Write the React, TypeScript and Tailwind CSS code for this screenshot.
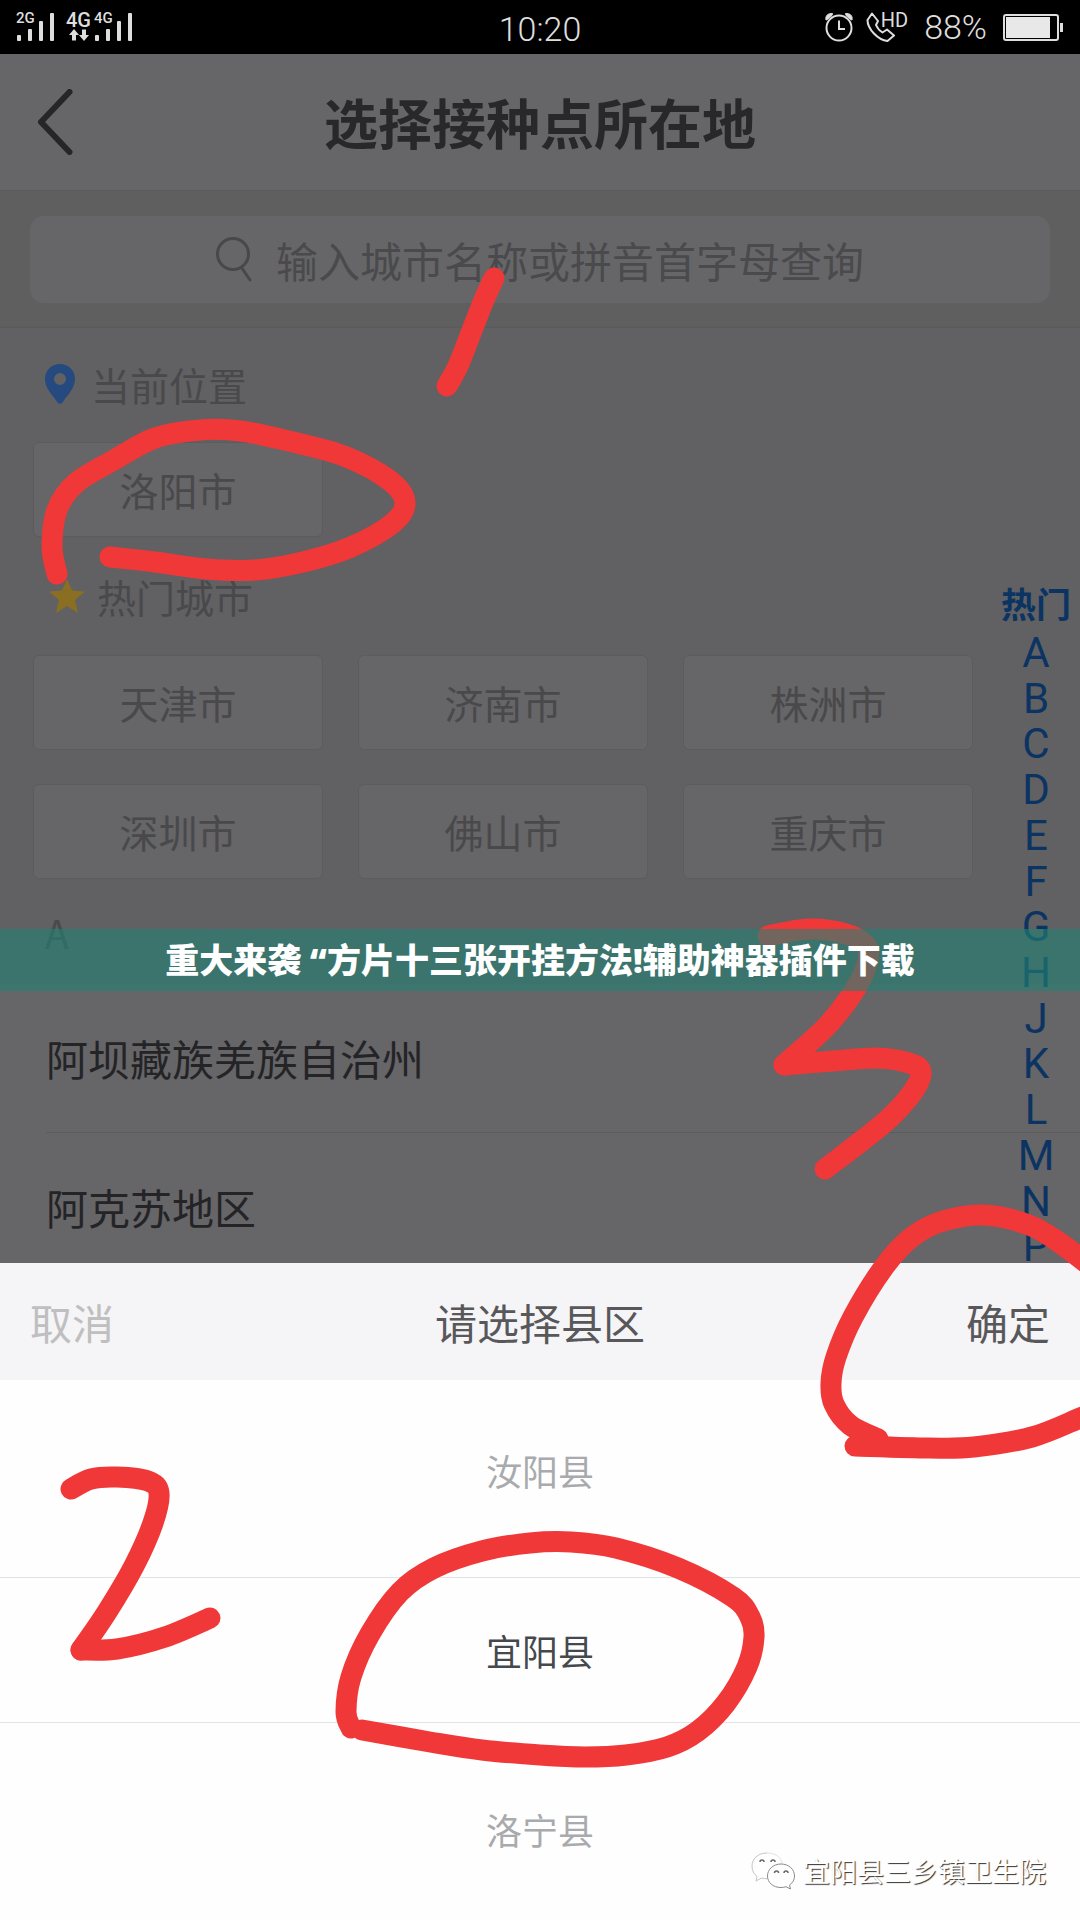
import clsx from 'clsx'

type Point = [number, number]

const HOT_CITIES = ['天津市', '济南市', '株洲市', '深圳市', '佛山市', '重庆市']
const LETTERS = ['A', 'B', 'C', 'D', 'E', 'F', 'G', 'H', 'J', 'K', 'L', 'M', 'N', 'P']

// pen strokes drawn over the page, a sharp corner starts a new stroke
const STROKES: Point[][] = [
  [[494, 278], [484, 300], [471, 333], [458, 366], [447, 386]],
  [
    [57, 574], [52, 547], [57, 510], [76, 483], [114, 460], [155, 438], [200, 430],
    [241, 431], [293, 442], [344, 456], [389, 480], [405, 502], [393, 523],
    [351, 547], [303, 562], [255, 570], [207, 569], [155, 562], [110, 557],
  ],
  [[768, 936], [809, 929], [846, 934], [867, 947], [865, 970], [850, 997], [826, 1027], [784, 1065]],
  [[784, 1065], [833, 1061], [877, 1058], [909, 1063], [921, 1072], [912, 1093], [884, 1123], [825, 1169]],
  [
    [878, 1439], [850, 1425], [834, 1404], [831, 1383], [836, 1357], [853, 1317], [884, 1267],
    [912, 1237], [943, 1221], [984, 1215], [1029, 1225], [1060, 1243], [1094, 1269],
  ],
  [[1094, 1412], [1080, 1418], [1032, 1437], [974, 1447], [929, 1448], [855, 1446]],
  [[71, 1489], [91, 1479], [117, 1477], [148, 1481], [159, 1493], [153, 1523], [134, 1566], [107, 1612], [81, 1650]],
  [[81, 1650], [117, 1649], [165, 1637], [210, 1618]],
  [
    [351, 1728], [346, 1712], [351, 1677], [370, 1634], [400, 1592], [434, 1568], [482, 1551],
    [530, 1543], [571, 1542], [616, 1548], [678, 1568], [733, 1597], [750, 1617], [754, 1637],
    [747, 1667], [726, 1703], [698, 1731], [667, 1747], [626, 1755], [585, 1757], [540, 1755],
    [482, 1750], [430, 1742], [362, 1730],
  ],
]

function smoothPath(points: Point[]) {
  let d = `M${points[0][0]} ${points[0][1]}`
  for (let i = 0; i < points.length - 1; i++) {
    const p0 = points[i - 1] ?? points[i]
    const p1 = points[i]
    const p2 = points[i + 1]
    const p3 = points[i + 2] ?? p2
    d += `C${p1[0] + (p2[0] - p0[0]) / 6} ${p1[1] + (p2[1] - p0[1]) / 6}`
    d += ` ${p2[0] - (p3[0] - p1[0]) / 6} ${p2[1] - (p3[1] - p1[1]) / 6}`
    d += ` ${p2[0]} ${p2[1]}`
  }
  return d
}

function Signal({ label }: { label: string }) {
  return (
    <div className="relative flex h-7 items-end gap-[7px]">
      <span className="absolute top-0 -left-px text-[15px] leading-[11px] font-medium">{label}</span>
      <i className="h-1.5 w-1 rounded-[1px] bg-[#dedede]" />
      <i className="h-3 w-1 rounded-[1px] bg-[#dedede]" />
      <i className="h-5 w-1 rounded-[1px] bg-[#dedede]" />
      <i className="h-7 w-1 rounded-[1px] bg-[#dedede]" />
    </div>
  )
}

function StatusBar() {
  return (
    <div className="grid h-[54px] grid-cols-3 items-center bg-black font-[Roboto,sans-serif] text-[#dedede]">
      <div className="flex items-center pl-[17px]">
        <Signal label="2G" />
        <div className="mr-1 ml-3 flex h-7 flex-col items-center justify-between">
          <span className="text-[20px] leading-[14px] font-medium">4G</span>
          <svg width="20" height="12" viewBox="0 0 20 12" fill="#dedede">
            <path d="M5 0l5 6H7v5.5H3V6H0zM15 12l-5-6h3V.5h4V6h3z" />
          </svg>
        </div>
        <Signal label="4G" />
      </div>
      <div className="pt-1 text-center text-[34px] leading-[40px] font-light">10:20</div>
      <div className="flex items-center justify-end pr-4">
        <svg width="30" height="30" viewBox="0 0 30 30" fill="none" stroke="#dedede" strokeWidth="2">
          <circle cx="15" cy="16" r="12.5" />
          <path d="M15 8.5V17h6" />
          <path d="M2 8C1 4 4 1 8.500 1.500L8 3.500L3.500 7.500zM28 8C29 4 26 1 21.500 1.500L22 3.500L26.500 7.500z" fill="#dedede" strokeWidth="1" />
        </svg>
        <div className="relative ml-3 h-[30px] w-[42px]">
          <svg width="30" height="30" viewBox="0 0 30 30" fill="none" stroke="#dedede" strokeWidth="2" strokeLinejoin="round">
            <path d="M6 1.500L1.500 8C1.500 17 12 28 21.500 29L28 23.500L21 17.500L16.500 20.500C13.500 18.500 11 15.500 10 13L12 9z" />
          </svg>
          <span className="absolute top-0 right-0 text-[20px] leading-[16px]">HD</span>
        </div>
        <span className="ml-4 text-[34px] leading-[40px] font-light">88%</span>
        <svg className="ml-4" width="61" height="27" viewBox="0 0 61 27" fill="none">
          <rect x="1" y="1" width="54" height="25" rx="2" stroke="#dedede" strokeWidth="2" />
          <rect x="3" y="3" width="44" height="21" fill="#e8e8e8" />
          <rect x="57" y="9" width="3" height="9" fill="#dedede" />
        </svg>
      </div>
    </div>
  )
}

function CityButton({ name }: { name: string }) {
  return (
    <button
      type="button"
      className="h-[95px] rounded-md border border-[#5c5b5d] bg-[#666567] pb-0.5 text-[39px] leading-[48px] text-[#49494b]"
    >
      {name}
    </button>
  )
}

function LetterIndex() {
  return (
    <nav className="absolute top-[248px] right-[9px] flex w-[70px] flex-col items-center font-medium text-[#0b3463]">
      <a href="#hot" className="text-[35px] leading-[54px] font-bold whitespace-nowrap">
        热门
      </a>
      <div className="grid h-[640px] w-full auto-rows-fr text-center font-[Roboto,sans-serif] font-normal">
        {LETTERS.map((letter) => (
          <a key={letter} href={`#${letter}`} className="text-[42px] leading-[45px]">
            {letter}
          </a>
        ))}
      </div>
    </nav>
  )
}

function PageContent() {
  return (
    <main className="relative overflow-hidden bg-[#616062]">
      <div className="pt-8 pr-[107px] pl-[33px] text-[39px] leading-[48px] text-[#49494b]">
        <h2 className="flex items-center pl-3">
          <svg width="30" height="40" viewBox="0 0 30 40">
            <path
              fill="#244a80"
              fillRule="evenodd"
              d="M15 0C6.500 0 0 6.500 0 15C0 25 8 31 12.500 38.500Q15 41 17.500 38.500C22 31 30 25 30 15C30 6.500 23.500 0 15 0zM15 9a6 6 0 1 1 0 12a6 6 0 0 1 0-12z"
            />
          </svg>
          <span className="ml-4">当前位置</span>
        </h2>
        <div className="mt-[34px] grid grid-cols-3 gap-x-[35px]">
          <CityButton name="洛阳市" />
        </div>
        <h2 id="hot" className="mt-[35px] flex items-center pl-4">
          <svg width="36" height="34" viewBox="0 0 36 34">
            <path fill="#8a6f22" d="M18 0l5 11.500 13 1-10 8.500 3 13-11-7-11 7 3-13-10-8.500 13-1z" />
          </svg>
          <span className="ml-3">热门城市</span>
        </h2>
        <div className="mt-[35px] grid grid-cols-3 gap-x-[35px] gap-y-[34px]">
          {HOT_CITIES.map((city) => (
            <CityButton key={city} name={city} />
          ))}
        </div>
        <h2 id="A" className="mt-[29px] mb-7 pl-3">
          A
        </h2>
      </div>
      <ul className="bg-[#666567] pl-[46px] text-[42px] leading-[60px] text-[#242427]">
        <li className="border-b border-[#5c5b5d] py-11">
          <a href="#aba">阿坝藏族羌族自治州</a>
        </li>
        <li className="pt-11 pb-[26px]">
          <a href="#akesu">阿克苏地区</a>
        </li>
      </ul>
      <LetterIndex />
    </main>
  )
}

function PickerItem({ name, selected, className }: { name: string; selected?: boolean; className: string }) {
  return (
    <button
      type="button"
      className={clsx(
        'flex w-full items-center justify-center text-[36px] leading-[48px]',
        selected ? 'border-y border-[#e2e3e4] text-[#45484d]' : 'text-[#a9aaad]',
        className,
      )}
    >
      {name}
    </button>
  )
}

function DistrictSheet() {
  return (
    <section className="bg-[#fefefe]">
      <div className="flex h-[117px] items-center justify-between bg-[#f5f4f6] px-[30px] text-[42px] leading-[60px] text-[#58585b]">
        <button type="button" className="text-[#bfbfc0]">
          取消
        </button>
        <h2>请选择县区</h2>
        <button type="button">确定</button>
      </div>
      <PickerItem name="汝阳县" className="h-[197px] pb-[18px]" />
      <PickerItem name="宜阳县" selected className="h-[146px]" />
      <PickerItem name="洛宁县" className="h-[197px] pt-3.5" />
    </section>
  )
}

function Watermark() {
  return (
    <div className="absolute right-[34px] bottom-[29px] flex items-center gap-2 text-[27px] leading-[36px] text-white [text-shadow:1px_1px_1px_#333]">
      <svg width="44" height="40" viewBox="0 0 44 40" fill="#fff" stroke="#8a8a8c" strokeWidth="1">
        <path stroke="#c4c4c6" d="M16 2C7 2 1 8 1 15c0 5 2 8 5 10.500L5 30l5.500-3c2 .6 4 .8 6 .7" />
        <path stroke="#e2e2e3" d="M16 2c8 0 14 4 15 10" />
        <path d="M30 13c-8 0-13.500 5.500-13.500 12S22 36.500 30 36.500c2 0 3.500-.3 5-.8l4.500 2.300-1-4c3-2 5-5 5-9C43.500 18.500 38 13 30 13z" />
        <path fill="none" stroke="#666" strokeWidth="1.500" d="M9 11a2 2 0 0 1 4 0M20 11a2 2 0 0 1 4 0M23.500 22a2 2 0 0 1 4 0M33 22a2 2 0 0 1 4 0" />
      </svg>
      <span>宜阳县三乡镇卫生院</span>
    </div>
  )
}

export default function App() {
  return (
    <div className="relative min-h-screen w-full overflow-hidden bg-[#fefefe] font-['Noto_Sans_CJK_SC',sans-serif]">
      <StatusBar />
      <header className="relative flex h-[137px] items-center justify-center border-b border-[#5a595b] bg-[#666668]">
        <button type="button" aria-label="返回" className="absolute left-9">
          <svg width="38" height="66" viewBox="0 0 38 66" fill="none" stroke="#262528" strokeWidth="6" strokeLinecap="round" strokeLinejoin="round">
            <path d="M33.500 3L5 33l28.500 30" />
          </svg>
        </button>
        <h1 className="text-[54px] leading-[72px] font-bold text-[#28272a]">选择接种点所在地</h1>
      </header>
      <div className="border-b border-[#5a595b] bg-[#5f5f60] px-[30px] pt-[25px] pb-6">
        <label className="flex h-[87px] items-center justify-center gap-6 rounded-[14px] bg-[#666668]">
          <svg width="36" height="46" viewBox="0 0 36 46" fill="none" stroke="#48484a" strokeWidth="3" strokeLinecap="round">
            <circle cx="17" cy="17" r="15.500" />
            <path d="M25.500 30.500L34 43" />
          </svg>
          <input
            type="text"
            aria-label="搜索城市"
            placeholder="输入城市名称或拼音首字母查询"
            className="w-[588px] bg-transparent text-[42px] leading-[60px] outline-none placeholder:text-[#4a4a4c]"
          />
        </label>
      </div>
      <PageContent />
      <DistrictSheet />
      <Watermark />

      <svg className="pointer-events-none absolute inset-0 h-full w-full" viewBox="0 0 1080 1920" fill="none" stroke="#f13838" strokeWidth="21" strokeLinecap="round" strokeLinejoin="round">
        {STROKES.map((points, index) => (
          <path key={index} d={smoothPath(points)} />
        ))}
      </svg>

      <p className="absolute inset-x-0 top-[929px] bg-[#228174]/62 text-center font-['Noto_Sans','Noto_Sans_CJK_SC',sans-serif] text-[34px] leading-[62px] font-black text-white">
        重大来袭 “方片十三张开挂方法!辅助神器插件下载
      </p>
    </div>
  )
}
